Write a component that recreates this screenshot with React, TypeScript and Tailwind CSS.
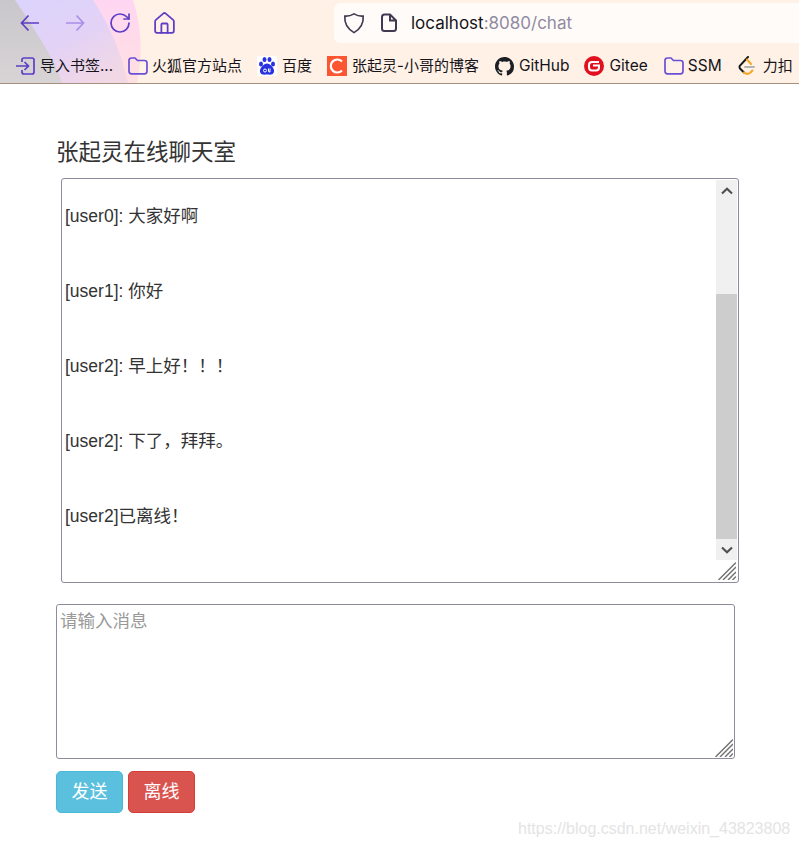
import React from "react";
import { RotateCw, Home } from "lucide-react";

const sans = "font-['Liberation_Sans','Noto_Sans_CJK_SC',sans-serif]";
const ui = "font-['Inter','Noto_Sans_CJK_SC',sans-serif]";
const purple = "#5d3ec6";

function Grip() {
  return (
    <svg width="18" height="18" viewBox="0 0 18 18" className="absolute right-0.5 bottom-0.5">
      <g stroke="#707070" strokeWidth="1.4" fill="none">
        <path d="M0.500 18 L18 0.500" />
        <path d="M5 18 L18 5" />
        <path d="M10 18 L18 10" />
        <path d="M14.500 18 L18 14.500" />
      </g>
    </svg>
  );
}

function Arrow({ color, flip }: { color: string; flip?: boolean }) {
  return (
    <svg width="20" height="18" viewBox="0 0 20 18" className={flip ? "-scale-x-100" : ""}>
      <path d="M1.500 9 H19 M8.500 1.500 L1.500 9 L8.500 16.500" fill="none" stroke={color} strokeWidth="1.700" />
    </svg>
  );
}

function FolderIcon() {
  return (
    <svg width="20" height="18" viewBox="0 0 20 18">
      <path
        d="M1 3.500 Q1 1 3.500 1 H7 L9.500 3.500 H16.500 Q19 3.500 19 6 V14 Q19 16.800 16.500 16.800 H3.500 Q1 16.800 1 14 Z"
        fill="none"
        stroke="#6a4fd6"
        strokeWidth="1.700"
      />
    </svg>
  );
}

function Bookmark({ icon, label, gap = "gap-[5px]", size = "text-[15px]" }: { icon: React.ReactNode; label: string; gap?: string; size?: string }) {
  return (
    <div className={`flex items-center ${gap} shrink-0`}>
      {icon}
      <span className={`${size} leading-5 text-[#15141a] whitespace-nowrap ${ui}`}>{label}</span>
    </div>
  );
}

function Msg({ children }: { children: React.ReactNode }) {
  return <p className="h-[75px] leading-[25px] pt-[24px] text-[17.500px] text-[#333] whitespace-nowrap">{children}</p>;
}

export default function App() {
  return (
    <div className={`relative h-[847px] w-[799px] overflow-hidden bg-white ${sans}`}>
      <header className="relative h-[84px] border-b border-[#a89080] bg-[#fff1e6]">
        <svg className="absolute inset-0" width="799" height="83" viewBox="0 0 799 83">
          <defs>
            <linearGradient id="v" x1="0" y1="0" x2="0.8" y2="1">
              <stop offset="0" stopColor="#d9d4fd" />
              <stop offset="0.55" stopColor="#e3d2f6" />
              <stop offset="1" stopColor="#f2d8e4" />
            </linearGradient>
            <linearGradient id="p" x1="0" y1="0" x2="0" y2="1">
              <stop offset="0" stopColor="#ffd6f2" />
              <stop offset="1" stopColor="#ffe0e0" />
            </linearGradient>
            <linearGradient id="g" x1="0" y1="0" x2="0" y2="1">
              <stop offset="0" stopColor="#c9c7cb" />
              <stop offset="1" stopColor="#d8d4d6" />
            </linearGradient>
          </defs>
          <path d="M0 0 H133 Q146 40 137 83 H0 Z" fill="url(#p)" />
          <path d="M0 0 H93 Q118 38 128 83 H0 Z" fill="url(#v)" />
          <path d="M0 0 H15 Q30 22 42 42 Q56 64 62 83 H0 Z" fill="url(#g)" />
        </svg>
        <div className="relative flex h-[43px] items-center">
          <div className="flex items-center pl-[7px] pt-[3px]">
            <div className="flex w-[45px] justify-center"><Arrow color={purple} /></div>
            <div className="flex w-[45px] justify-center"><Arrow color="#a88fe8" flip /></div>
            <div className="flex w-[45px] justify-center"><RotateCw size={24} color={purple} strokeWidth={1.7} /></div>
            <div className="flex w-[45px] justify-center"><Home size={25} color={purple} strokeWidth={1.7} /></div>
          </div>
          <div className="absolute left-[334px] top-[3px] flex h-[40px] w-[465px] items-center rounded-l-[6px] bg-[#fffbf8] pl-[9px]">
            <svg width="22" height="22" viewBox="0 0 24 24" fill="none" stroke="#3f3a52" strokeWidth="1.800">
              <path d="M12 2 Q17 5 22 4.500 Q23 16 12 22.500 Q1 16 2 4.500 Q7 5 12 2 Z" />
            </svg>
            <svg width="18" height="20" viewBox="0 0 18 20" fill="none" stroke="#3f3a52" strokeWidth="2" className="ml-[15px]">
              <path d="M2 4 Q2 1.500 4.500 1.500 H10 L16 7.500 V15.500 Q16 18 13.500 18 H4.500 Q2 18 2 15.500 Z M10 1.500 V7.500 H16" />
            </svg>
            <span className={`ml-[13px] text-[17px] leading-6 text-[#15141a] ${ui}`}>
              localhost<span className="text-[#8f8ba3]">:8080/chat</span>
            </span>
          </div>
        </div>
        <div className="relative flex h-[40px] items-center pl-[16px] pt-[6px] overflow-hidden">
          <Bookmark
            icon={
              <svg width="19" height="18" viewBox="0 0 19 18" fill="none" stroke={purple} strokeWidth="1.700">
                <path d="M6 5 V3 Q6 1 8 1 H16 Q18 1 18 3 V15 Q18 17 16 17 H8 Q6 17 6 15 V13" />
                <path d="M0 9 H12 M8.500 5 L12.500 9 L8.500 13" />
              </svg>
            }
            label="导入书签..."
          />
          <div className="ml-[15px]">
            <Bookmark icon={<FolderIcon />} label="火狐官方站点" gap="gap-[4px]" />
          </div>
          <div className="ml-[15px]">
            <Bookmark
              icon={
                <svg width="20" height="20" viewBox="0 0 20 20">
                  <rect width="20" height="20" rx="1" fill="#fff" />
                  <g fill="#2932e1">
                    <ellipse cx="4" cy="8" rx="2" ry="2.500" />
                    <ellipse cx="7.500" cy="3.500" rx="2" ry="2.500" />
                    <ellipse cx="12.500" cy="3.500" rx="2" ry="2.500" />
                    <ellipse cx="16" cy="8" rx="2" ry="2.500" />
                    <path d="M10 7.500 C13 7.500 18 12.500 17 16 C16 19.500 12 18.500 10 18.500 C8 18.500 4 19.500 3 16 C2 12.500 7 7.500 10 7.500 Z" />
                  </g>
                  <circle cx="8" cy="14.500" r="1.500" fill="none" stroke="#fff" strokeWidth="1" />
                  <path d="M11.500 12.500 V15 Q11.500 16.300 13 16 V12.500" fill="none" stroke="#fff" strokeWidth="1" />
                </svg>
              }
              label="百度"
            />
          </div>
          <div className="ml-[15px]">
            <Bookmark
              icon={
                <svg width="20" height="20" viewBox="0 0 20 20">
                  <rect width="20" height="20" fill="#fc5531" />
                  <path d="M15 5.500 A6.500 6.500 0 1 0 15 14.500" fill="none" stroke="#fff" strokeWidth="2.200" />
                </svg>
              }
              label="张起灵-小哥的博客"
            />
          </div>
          <div className="ml-[16px]">
            <Bookmark
              icon={
                <svg width="19" height="19" viewBox="0 0 16 16">
                  <path
                    fill="#1b1f23"
                    d="M8 0C3.580 0 0 3.580 0 8c0 3.540 2.290 6.530 5.470 7.590.4.070.55-.17.55-.38 0-.19-.01-.82-.01-1.490-2.010.37-2.530-.49-2.690-.94-.09-.23-.48-.94-.82-1.130-.28-.15-.68-.52-.01-.53.63-.01 1.080.58 1.230.82.72 1.210 1.870.87 2.330.66.070-.52.280-.87.510-1.070-1.780-.2-3.640-.89-3.640-3.950 0-.87.310-1.590.820-2.150-.08-.2-.36-1.020.08-2.120 0 0 .67-.21 2.200.82.640-.18 1.320-.27 2-.27s1.360.09 2 .27c1.530-1.040 2.200-.82 2.200-.82.440 1.100.16 1.920.08 2.120.51.560.82 1.270.82 2.150 0 3.070-1.870 3.750-3.650 3.950.29.250.54.730.54 1.480 0 1.070-.01 1.930-.01 2.200 0 .21.150.46.550.38A8.010 8.010 0 0 0 16 8c0-4.420-3.580-8-8-8z"
                  />
                </svg>
              }
              label="GitHub"
              size="text-[15.500px]"
            />
          </div>
          <div className="ml-[15px]">
            <Bookmark
              icon={
                <svg width="20" height="20" viewBox="0 0 20 20">
                  <circle cx="10" cy="10" r="10" fill="#e2101f" />
                  <path d="M15 6 H8 Q5 6 5 9 V11 Q5 14.500 8 14.500 H12 Q15 14.500 15 11.500 V9.500 H9" fill="none" stroke="#fff" strokeWidth="2" />
                </svg>
              }
              label="Gitee"
              size="text-[15.500px]"
            />
          </div>
          <div className="ml-[16px]">
            <Bookmark icon={<FolderIcon />} label="SSM" gap="gap-[4px]" size="text-[15.500px]" />
          </div>
          <div className="ml-[16px]">
            <Bookmark
              icon={
                <svg width="18" height="20" viewBox="0 0 18 20" fill="none" strokeWidth="2" strokeLinecap="round">
                  <path d="M10 1 L2 9.500 Q1 11 2 12.500 L6 16.500" stroke="#1a1a1a" />
                  <path d="M6 16.500 Q9 19 12 17 L14.500 14.500" stroke="#f5a623" />
                  <path d="M9 3.500 L13 8" stroke="#f5a623" />
                  <path d="M7 11 H16" stroke="#b3b3b3" />
                </svg>
              }
              label="力扣"
              gap="gap-[7px]"
            />
          </div>
        </div>
      </header>

      <main className="pl-[56px] pt-[53px]">
        <h1 className="h-[33px] text-[22.500px] leading-[32px] font-normal text-[#333]">张起灵在线聊天室</h1>
        <section className="relative ml-[5px] mt-[8px] flex h-[405px] w-[678px] rounded-[3px] border border-[#8f8b9c] pl-[3px] pr-[1px] py-px">
          <div className="flex-1 overflow-hidden">
            <Msg>[user0]: 大家好啊</Msg>
            <Msg>[user1]: 你好</Msg>
            <Msg>[user2]: 早上好！！！</Msg>
            <Msg>[user2]: 下了，拜拜。</Msg>
            <Msg>[user2]已离线！</Msg>
          </div>
          <div className="flex h-[380px] w-[21px] flex-col bg-[#f0f0f0]">
            <div className="flex h-[21px] items-center justify-center">
              <svg width="12" height="8" viewBox="0 0 12 8"><path d="M1 6.500 L6 1.800 L11 6.500" fill="none" stroke="#505050" strokeWidth="2.200" /></svg>
            </div>
            <div className="mt-[93px] h-[245px] bg-[#cdcdcd]" />
            <div className="flex h-[21px] items-center justify-center">
              <svg width="12" height="8" viewBox="0 0 12 8"><path d="M1 1.500 L6 6.200 L11 1.500" fill="none" stroke="#505050" strokeWidth="2.200" /></svg>
            </div>
          </div>
          <Grip />
        </section>
        <div className="relative mt-[21px] h-[155px] w-[679px]">
          <textarea
            placeholder="请输入消息"
            className="block h-full w-full resize-none rounded-[3px] border border-[#8f8b9c] bg-white px-[3px] py-[4px] text-[17.500px] leading-[25px] text-[#333] outline-none placeholder:text-[#999]"
          />
          <Grip />
        </div>
        <div className="mt-[12px] flex gap-[5px]">
          <button className="h-[42px] w-[67px] rounded-[5px] border border-[#46b8da] bg-[#5bc0de] text-[18px] text-white">发送</button>
          <button className="h-[42px] w-[67px] rounded-[5px] border border-[#d43f3a] bg-[#d9534f] text-[18px] text-white">离线</button>
        </div>
      </main>
      <span className="absolute left-[518px] top-[820px] text-[16px] leading-[18px] text-[#e4e4e4] whitespace-nowrap">https://blog.csdn.net/weixin_43823808</span>
    </div>
  );
}
